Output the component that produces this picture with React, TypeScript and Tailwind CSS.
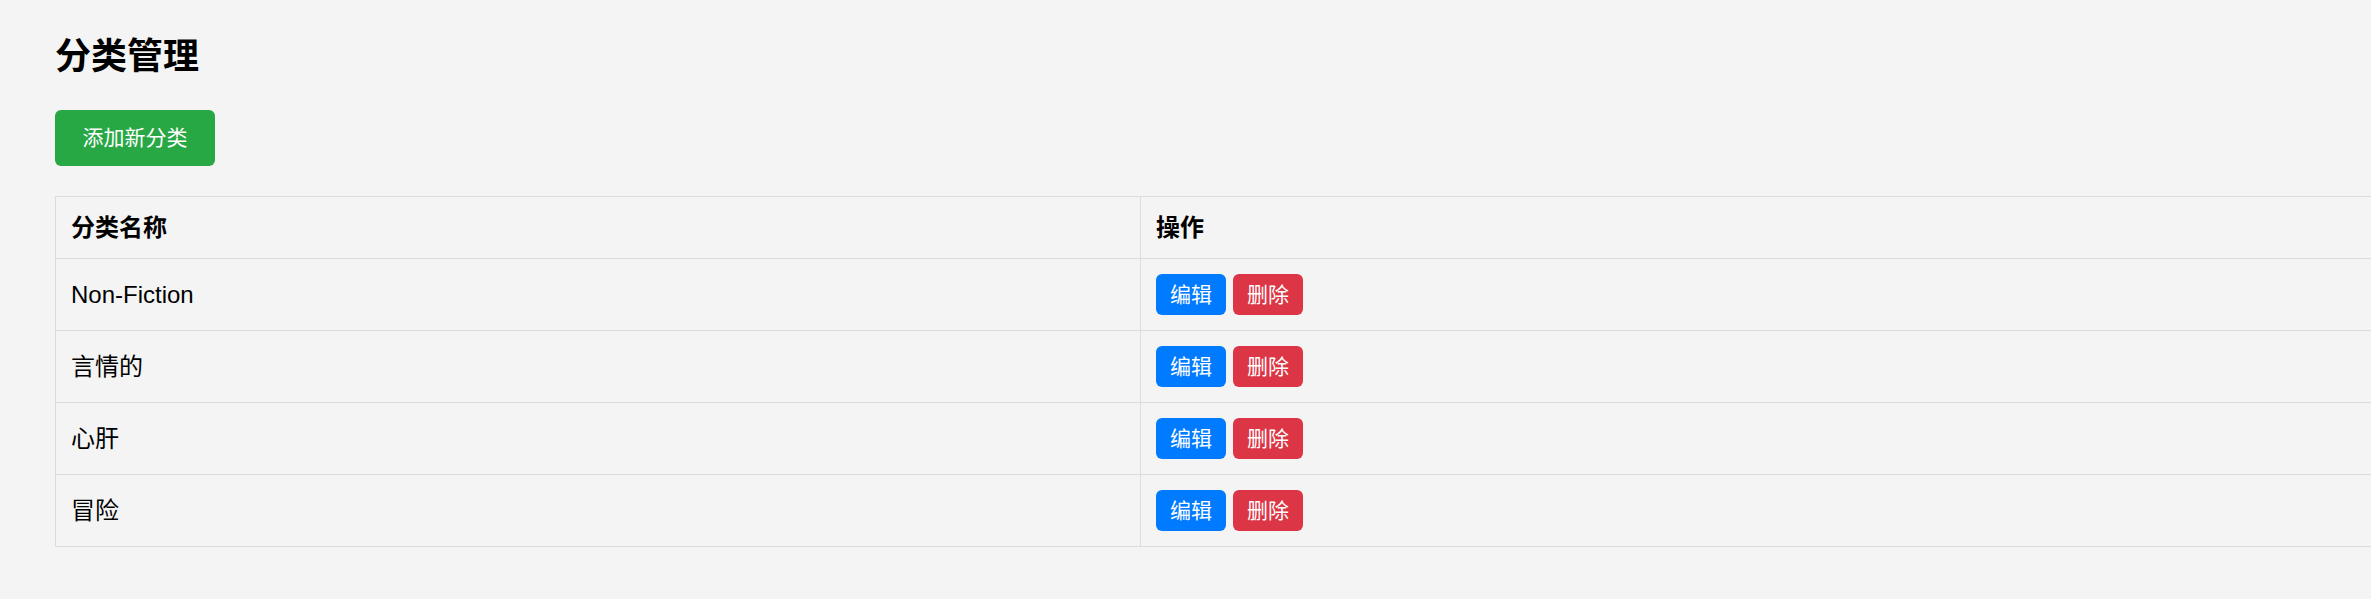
import React from "react";

const rows = ["Non-Fiction", "言情的", "心肝", "冒险"];

export default function App() {
  return (
    <div
      className="min-h-screen w-full overflow-hidden bg-[#f4f4f4] text-black"
      style={{ fontFamily: '"Liberation Sans", "Noto Sans CJK SC", sans-serif' }}
    >
      <div className="pl-[55px] pt-[39px]">
        <h1 className="m-0 text-[36px] leading-[36px] font-bold">分类管理</h1>
        <button className="mt-[35px] flex h-[56px] w-[160px] items-center justify-center rounded-[6px] bg-[#28a745] text-[21px] text-white">
          添加新分类
        </button>
        <table className="mt-[30px] w-[2400px] table-fixed border-collapse border border-[#dcdcdc]">
          <colgroup>
            <col className="w-[1085px]" />
            <col />
          </colgroup>
          <thead>
            <tr className="h-[62px]">
              <th className="border border-[#dcdcdc] px-[15px] text-left align-middle text-[24px] font-bold">
                分类名称
              </th>
              <th className="border border-[#dcdcdc] px-[15px] text-left align-middle text-[24px] font-bold">
                操作
              </th>
            </tr>
          </thead>
          <tbody>
            {rows.map((name) => (
              <tr key={name} className="h-[72px]">
                <td className="border border-[#dcdcdc] px-[15px] align-middle text-[24px]">{name}</td>
                <td className="border border-[#dcdcdc] px-[15px] align-middle">
                  <div className="flex gap-[7px]">
                    <button className="flex h-[41px] w-[70px] items-center justify-center rounded-[6px] bg-[#007bff] text-[21px] text-white">
                      编辑
                    </button>
                    <button className="flex h-[41px] w-[70px] items-center justify-center rounded-[6px] bg-[#dc3545] text-[21px] text-white">
                      删除
                    </button>
                  </div>
                </td>
              </tr>
            ))}
          </tbody>
        </table>
      </div>
    </div>
  );
}
